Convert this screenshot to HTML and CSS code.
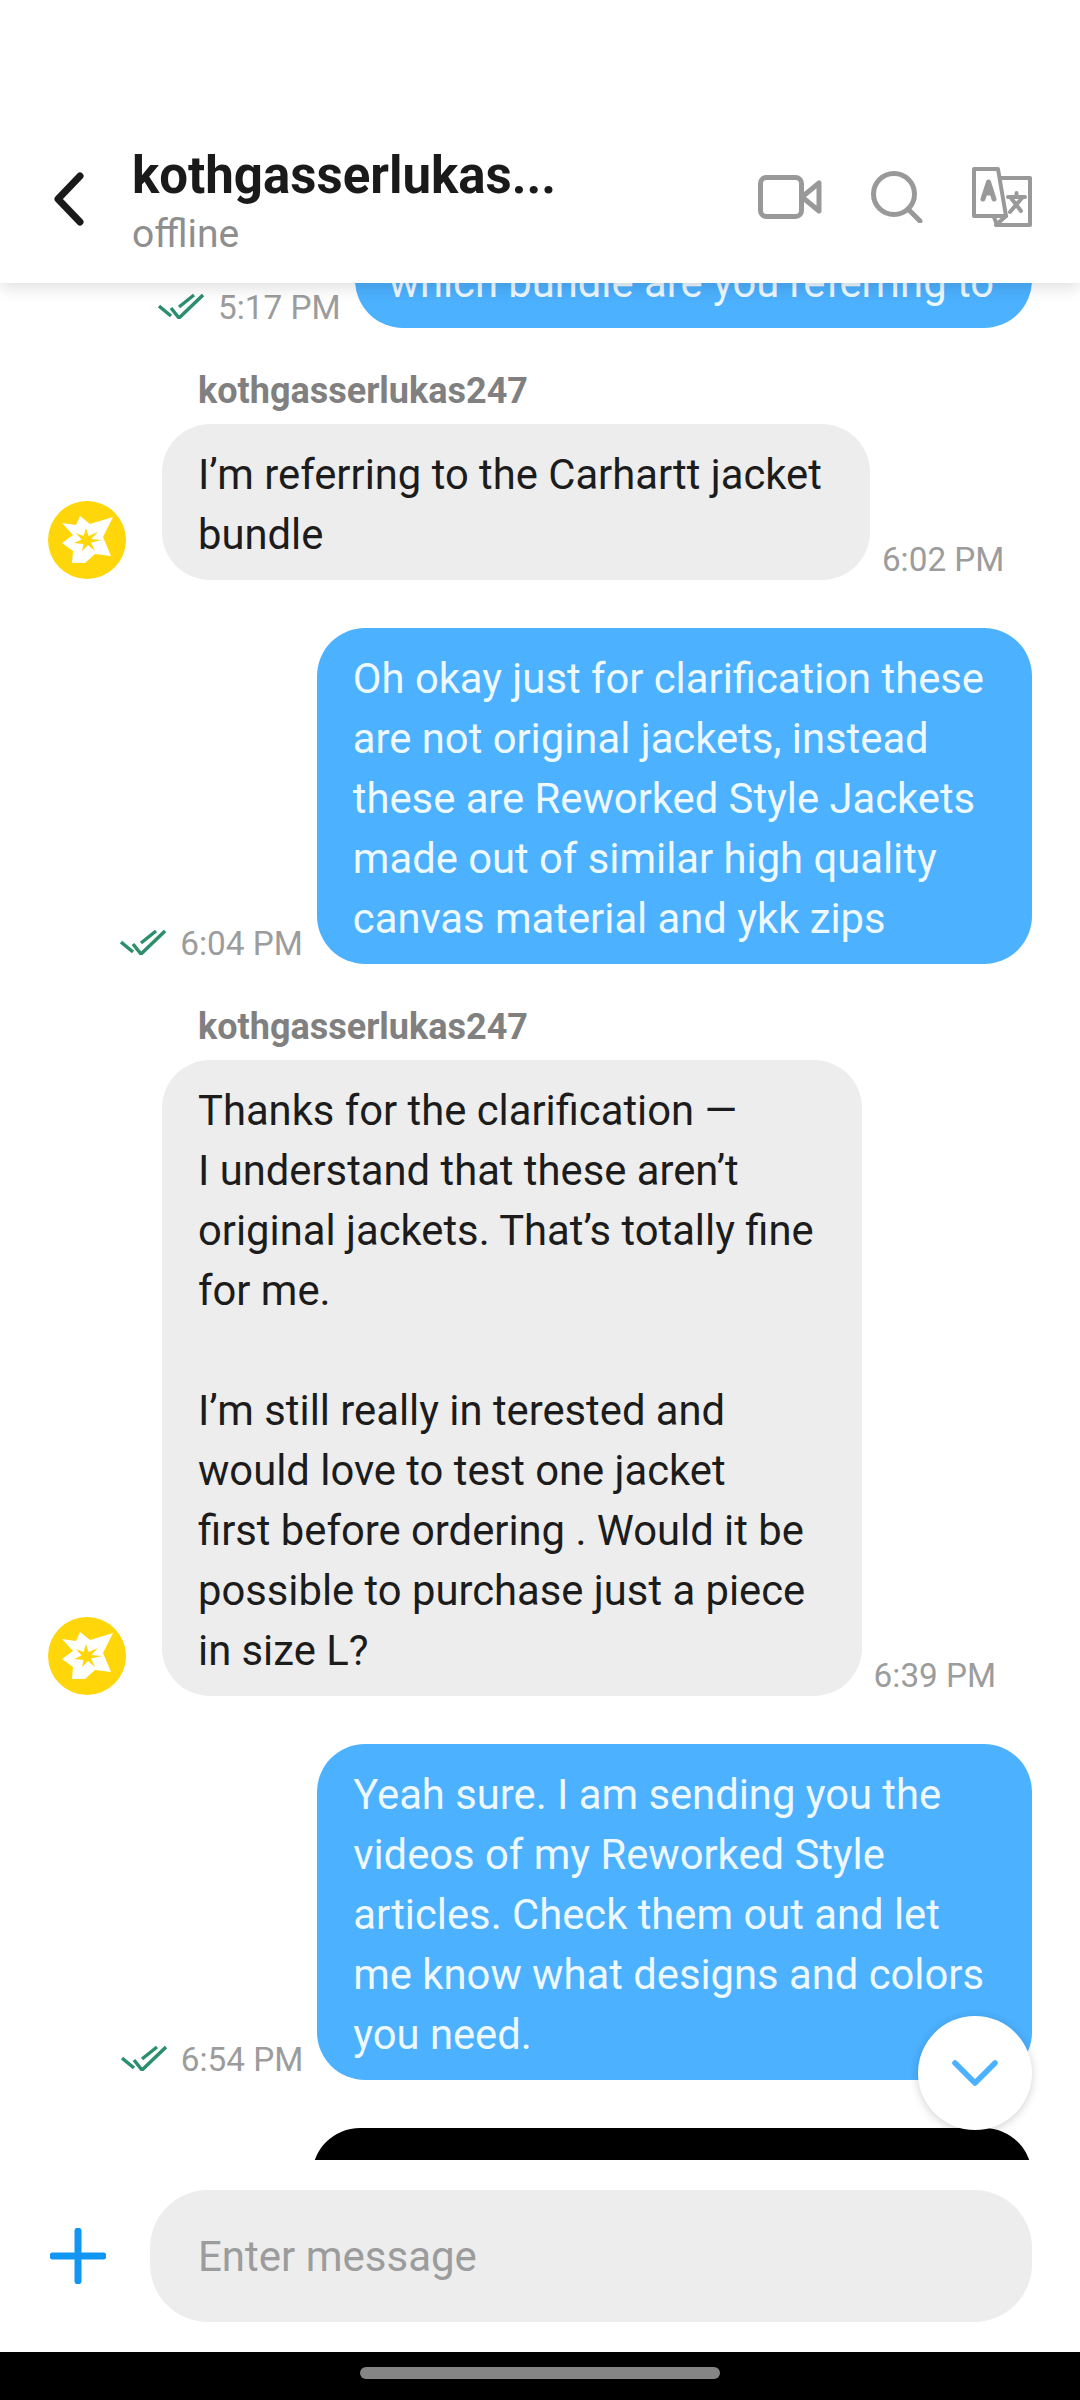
FILE: index.html
```html
<!DOCTYPE html>
<html lang="en">
<head>
<meta charset="utf-8">
<title>Chat</title>
<link rel="stylesheet" href="styles.css">
</head>
<body>
<div class="app">
  <header class="topbar">
    <svg class="back" viewBox="0 0 34 54"><path d="M28 4 6 27l22 23"/></svg>
    <div class="peer">
      <div class="peer-name">kothgasserlukas...</div>
      <div class="peer-status">offline</div>
    </div>
    <div class="actions">
      <svg class="ic-video" viewBox="0 0 64 44"><rect x="2.500" y="2.500" width="41" height="39" rx="6"/><path d="M44 22 61 8v28z"/></svg>
      <svg class="ic-search" viewBox="0 0 52 52"><circle cx="23" cy="23" r="20.500"/><path d="m37 38 12 12"/></svg>
      <svg class="ic-translate" viewBox="0 0 60 60"><path d="M2 2h24l8 47H2z"/><path d="M29 11h29v47H25l-3-8"/><path d="M34 49 24 58"/><path d="M11 32 16.500 15 22 32M13 26h7" class="glyph"/><path d="M36 30h17M44.500 26v3M39 31l10 13M50 31 38 45"/></svg>
    </div>
  </header>

  <main class="thread">
    <div class="row out first">
      <svg class="ticks" viewBox="0 0 46 26"><path d="M1 13l12 10M13 15l8 10L45 2M21 14 36 2"/></svg>
      <span class="time">5:17 PM</span>
      <div class="bubble blue tight">which bundle are you referring to</div>
    </div>

    <div class="sender">kothgasserlukas247</div>
    <div class="row in">
      <svg class="avatar" viewBox="0 0 78 78"><circle cx="39" cy="39" r="39" fill="#ffd60a"/><path fill="#fff" d="M14 22l14 2 4-9 10 8 23-7-10 20 8 19-16-2-10 9H24l1-12-11-8 11-8z"/><path fill="#ffd60a" d="M38 27l2.500 8 9.500-4-7 7 11 1-11 2.500 4 8.500-7-6-6 6 1.500-7-9.500-1 7.500-3.500-5.500-6.500 7.500 3z"/></svg>
      <div class="bubble gray">I’m referring to the Carhartt jacket<br>bundle</div>
      <span class="time">6:02 PM</span>
    </div>

    <div class="row out">
      <svg class="ticks" viewBox="0 0 46 26"><path d="M1 13l12 10M13 15l8 10L45 2M21 14 36 2"/></svg>
      <span class="time">6:04 PM</span>
      <div class="bubble blue">Oh okay just for clarification these<br>are not original jackets, instead<br>these are Reworked Style Jackets<br>made out of similar high quality<br>canvas material and ykk zips</div>
    </div>

    <div class="sender">kothgasserlukas247</div>
    <div class="row in">
      <svg class="avatar" viewBox="0 0 78 78"><circle cx="39" cy="39" r="39" fill="#ffd60a"/><path fill="#fff" d="M14 22l14 2 4-9 10 8 23-7-10 20 8 19-16-2-10 9H24l1-12-11-8 11-8z"/><path fill="#ffd60a" d="M38 27l2.500 8 9.500-4-7 7 11 1-11 2.500 4 8.500-7-6-6 6 1.500-7-9.500-1 7.500-3.500-5.500-6.500 7.500 3z"/></svg>
      <div class="bubble gray">Thanks for the clarification —<br>I understand that these aren’t<br>original jackets. That’s totally fine<br>for me.<br><br>I’m still really in terested and<br>would love to test one jacket<br>first before ordering . Would it be<br>possible to purchase just a piece<br>in size L?</div>
      <span class="time">6:39 PM</span>
    </div>

    <div class="row out">
      <svg class="ticks" viewBox="0 0 46 26"><path d="M1 13l12 10M13 15l8 10L45 2M21 14 36 2"/></svg>
      <span class="time">6:54 PM</span>
      <div class="bubble blue">Yeah sure. I am sending you the<br>videos of my Reworked Style<br>articles. Check them out and let<br>me know what designs and colors<br>you need.</div>
    </div>

    <div class="row out">
      <div class="bubble black"></div>
    </div>

    <button class="jump" type="button" aria-label="Scroll to bottom">
      <svg viewBox="0 0 46 26"><path d="M3 3l20 20L43 3"/></svg>
    </button>
  </main>

  <footer class="composer">
    <svg class="plus" viewBox="0 0 56 56"><path d="M28 3v50M3 28h50"/></svg>
    <div class="input">Enter message</div>
  </footer>

  <nav class="navbar"><span class="handle"></span></nav>
</div>
</body>
</html>
```
FILE: styles.css
```css
* { box-sizing: border-box; }
html, body { margin: 0; padding: 0; background: #fff; }
body { font-family: Roboto, "Noto Sans", sans-serif; }

.app { width: 1080px; height: 2400px; display: flex; flex-direction: column; overflow: hidden; }

.topbar {
  height: 283px; flex: none; background: #fff; display: flex; align-items: flex-start;
  padding: 146px 48px 0 52px; position: relative; z-index: 2;
  box-shadow: 0 4px 16px rgba(0,0,0,.14);
}
.back { width: 34px; height: 54px; margin-top: 26px; fill: none; stroke: #1a1a1a; stroke-width: 7; stroke-linecap: round; stroke-linejoin: round; flex: none; }
.peer { margin-left: 46px; flex: 1; }
.peer-name { font-size: 51px; font-weight: 700; line-height: 60px; color: #1a1a1a; }
.peer-status { font-size: 39px; line-height: 48px; color: #8e8e8e; margin-top: 4px; }
.actions { display: flex; align-items: center; margin-top: 21px; }
.actions svg { fill: none; stroke: #999; stroke-linecap: round; stroke-linejoin: round; }
.ic-video { width: 64px; height: 44px; stroke-width: 5; }
.ic-search { width: 52px; height: 52px; stroke-width: 5; margin-left: 49px; }
.ic-translate { width: 60px; height: 60px; stroke-width: 4; margin-left: 49px; }
.ic-translate .glyph { stroke-width: 5; }

.thread { flex: 1; min-height: 0; overflow: hidden; position: relative; padding: 0 48px; display: flex; flex-direction: column; }

.row { display: flex; align-items: flex-end; margin-top: 48px; flex: none; }
.row.first { margin-top: -51px; }
.row.out { justify-content: flex-end; }

.bubble { border-radius: 48px; padding: 21px 48px 15px 36px; font-size: 41.750px; line-height: 60px; }
.tight { padding: 21px 38px 15px 34px; }
.blue { background: #4cb1ff; color: #eef8ff; }
.gray { background: #ededed; color: #1c1c1c; }
.black { background: #000; width: 720px; height: 320px; }

.sender { font-size: 36px; font-weight: 700; line-height: 30px; color: #808080; margin: 48px 0 18px 150px; flex: none; }
.sender + .row { margin-top: 0; }

.avatar { width: 78px; height: 78px; flex: none; margin: 0 36px 1px 0; }
.time { font-size: 33.300px; line-height: 38px; color: #9c9c9c; flex: none; margin-bottom: 1px; }
.in .time { margin-left: 12px; }
.out .time { margin-right: 14px; }
.ticks { width: 46px; height: 26px; margin-right: 14px; margin-bottom: 9px; fill: none; stroke: #2c8f6c; stroke-width: 3.500; flex: none; }

.jump {
  position: absolute; right: 48px; top: 1733px; width: 114px; height: 114px; border: 0; padding: 0; border-radius: 50%;
  background: #fff; box-shadow: 0 2px 10px rgba(0,0,0,.18); display: flex; align-items: center; justify-content: center;
}
.jump svg { width: 46px; height: 26px; fill: none; stroke: #4cb1ff; stroke-width: 5.500; stroke-linecap: round; stroke-linejoin: round; }

.composer { height: 192px; flex: none; background: #fff; display: flex; align-items: center; padding: 0 48px 0 50px; }
.plus { width: 56px; height: 56px; fill: none; stroke: #1296f3; stroke-width: 7; stroke-linecap: round; flex: none; }
.input { margin-left: 44px; flex: 1; height: 132px; border-radius: 58px; background: #ededed; color: #9c9c9c; font-size: 42px; display: flex; align-items: center; padding-left: 48px; }

.navbar { height: 48px; flex: none; background: #000; display: flex; justify-content: center; padding-top: 15px; }
.handle { width: 360px; height: 12px; border-radius: 6px; background: #858585; }
```
